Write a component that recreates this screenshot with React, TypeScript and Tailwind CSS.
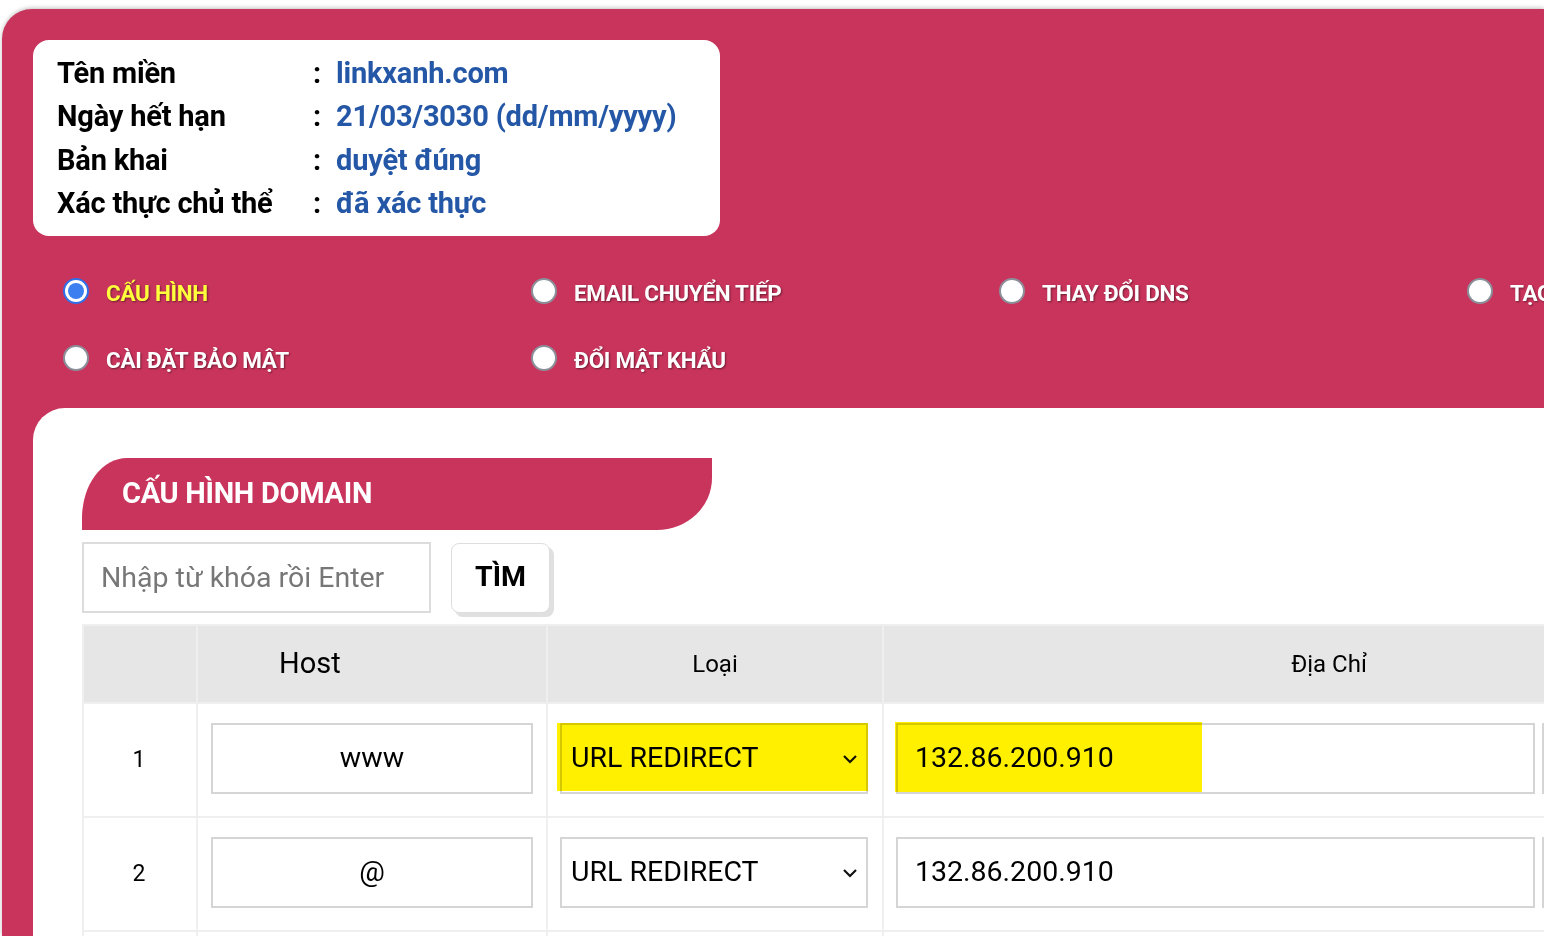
import React from "react";

const info = [
  { label: "Tên miền", value: "linkxanh.com" },
  { label: "Ngày hết hạn", value: "21/03/3030 (dd/mm/yyyy)" },
  { label: "Bản khai", value: "duyệt đúng" },
  { label: "Xác thực chủ thể", value: "đã xác thực" },
];

const options = [
  { label: "CẤU HÌNH", checked: true },
  { label: "EMAIL CHUYỂN TIẾP" },
  { label: "THAY ĐỔI DNS" },
  { label: "TẠO NAMESERVER" },
  { label: "CÀI ĐẶT BẢO MẬT" },
  { label: "ĐỔI MẬT KHẨU" },
];

const records = [
  { id: 1, host: "www", type: "URL REDIRECT", addr: "132.86.200.910", mark: true },
  { id: 2, host: "@", type: "URL REDIRECT", addr: "132.86.200.910" },
];

function Radio({ checked }: { checked?: boolean }) {
  return checked ? (
    <span className="flex h-[26px] w-[26px] shrink-0 items-center justify-center rounded-full border-2 border-[#2f6fe8] bg-white">
      <span className="h-[16px] w-[16px] rounded-full bg-[#3b7ff0]" />
    </span>
  ) : (
    <span className="h-[26px] w-[26px] shrink-0 rounded-full border-2 border-[#8a8f99] bg-white" />
  );
}

function Chevron() {
  return (
    <svg width="16" height="12" viewBox="0 0 16 12" className="shrink-0">
      <path d="M2 3 8 9 14 3" fill="none" stroke="#111" strokeWidth="2.2" />
    </svg>
  );
}

export default function App() {
  return (
    <div className="h-[936px] w-[1544px] overflow-hidden bg-white pl-[2px] pt-[9px] font-['Roboto',sans-serif]">
      <div className="flex h-full flex-col rounded-tl-[30px] bg-[#c9345c] pl-[31px] pt-[31px] shadow-[0_-1px_4px_rgba(0,0,0,0.25)]">
        <div className="flex h-[196px] w-[687px] flex-col gap-[9.5px] rounded-[16px] bg-white px-[24px] pt-[16px]">
          {info.map((r) => (
            <div key={r.label} className="flex h-[34px] items-center text-[29px] font-bold leading-none tracking-[-0.2px]">
              <span className="w-[256px] text-black">{r.label}</span>
              <span className="w-[23px] text-black">:</span>
              <span className="text-[#2557a7]">{r.value}</span>
            </div>
          ))}
        </div>

        <div className="mt-[42px] grid w-[1900px] grid-cols-[468px_468px_468px_468px] gap-y-[41px] pl-[30px]">
          {options.map((o) => (
            <div key={o.label} className="flex h-[26px] items-center gap-[17px]">
              <Radio checked={o.checked} />
              <span
                className={`mt-[5px] text-[22.5px] font-bold leading-none tracking-[-0.3px] [text-shadow:1px_1px_2px_rgba(0,0,0,0.45)] ${
                  o.checked ? "text-[#ffff3c]" : "text-white"
                }`}
              >
                {o.label}
              </span>
            </div>
          ))}
        </div>

        <div className="mt-[37px] flex-1 overflow-hidden rounded-tl-[32px] bg-white pl-[49px] pt-[50px]">
          <div className="flex h-[72px] w-[630px] items-center rounded-tl-[45px_60px] rounded-br-[55px_52px] bg-[#c9345c] pl-[40px]">
            <span className="text-[29px] font-bold tracking-[-0.3px] text-white">CẤU HÌNH DOMAIN</span>
          </div>

          <div className="mt-[12px] flex items-center gap-[20px]">
            <input
              placeholder="Nhập từ khóa rồi Enter"
              className="h-[71px] w-[349px] border-2 border-[#dcdcdc] px-[17px] text-[28.5px] text-black outline-none placeholder:text-[#777]"
            />
            <button className="h-[70px] w-[99px] rounded-[8px] border border-[#dedede] bg-white text-[28.5px] font-bold text-black shadow-[4px_4px_0_#e0e0e0]">
              TÌM
            </button>
          </div>

          <table className="mt-[11px] w-[1800px] table-fixed border-collapse">
            <colgroup>
              <col className="w-[114px]" />
              <col className="w-[350px]" />
              <col className="w-[336px]" />
              <col className="w-[892px]" />
              <col />
            </colgroup>
            <thead>
              <tr className="h-[78px] bg-[#e6e6e6]">
                <th className="border-2 border-[#efefef]" />
                <th className="border-2 border-[#efefef] pl-[81px] text-left text-[29px] font-normal text-black">Host</th>
                <th className="border-2 border-[#efefef] text-[24px] font-normal text-black">Loại</th>
                <th className="border-2 border-[#efefef] text-[24px] font-normal text-black">Địa Chỉ</th>
                <th className="border-2 border-[#efefef]" />
              </tr>
            </thead>
            <tbody>
              {records.map((r) => (
                <tr key={r.id} className="h-[114px]">
                  <td className="border-2 border-[#efefef] pr-[2px] text-center text-[23px] text-black">{r.id}</td>
                  <td className="border-2 border-[#efefef] px-[13px] pb-[3px]">
                    <div className="flex h-[71px] items-center justify-center border-2 border-[#d5d5d5] text-[28.5px] text-black">
                      {r.host}
                    </div>
                  </td>
                  <td className="border-2 border-[#efefef] pl-[12px] pr-[14px] pb-[3px]">
                    <div className="relative flex h-[71px] items-center justify-between border-2 border-[#d5d5d5] pl-[9px] pr-[8px] text-[28.5px] text-black">
                      <span>{r.type}</span>
                      <Chevron />
                      {r.mark && (
                        <div className="absolute left-[-5px] top-[-2px] h-[68px] w-[311px] bg-[#fff000] mix-blend-multiply" />
                      )}
                    </div>
                  </td>
                  <td className="border-2 border-[#efefef] pl-[12px] pb-[3px]">
                    <div className="flex items-center gap-[7px]">
                      <div className="relative flex h-[71px] w-[639px] shrink-0 items-center border-2 border-[#d5d5d5] pl-[17px] text-[28.5px] text-black">
                        <span>{r.addr}</span>
                        {r.mark && (
                          <div className="absolute left-[-3px] top-[-3px] h-[70px] w-[307px] bg-[#fff000] mix-blend-multiply" />
                        )}
                      </div>
                      <div className="h-[71px] flex-1 border-2 border-[#d5d5d5]" />
                    </div>
                  </td>
                  <td className="border-2 border-[#efefef]" />
                </tr>
              ))}
              <tr className="h-[114px]">
                <td className="border-2 border-[#efefef]" />
                <td className="border-2 border-[#efefef]" />
                <td className="border-2 border-[#efefef]" />
                <td className="border-2 border-[#efefef]" />
                <td className="border-2 border-[#efefef]" />
              </tr>
            </tbody>
          </table>
        </div>
      </div>
    </div>
  );
}
